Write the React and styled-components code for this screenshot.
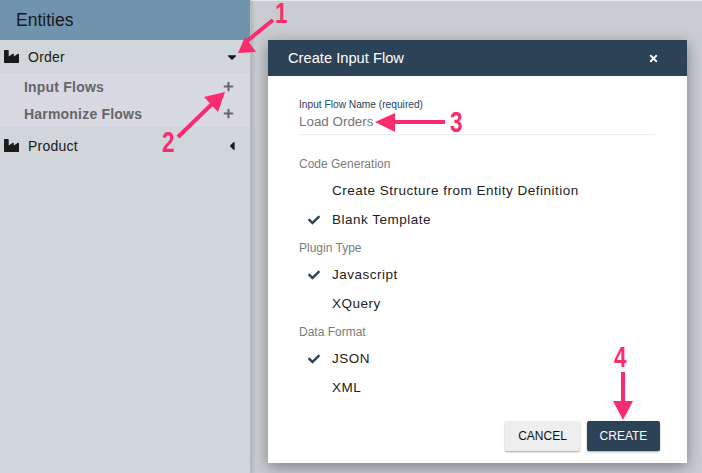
import styled, { createGlobalStyle } from "styled-components";
import { FaCaretDown, FaCaretLeft, FaCheck, FaIndustry, FaPlus, FaTimes } from "react-icons/fa";

const sections = [
  {
    title: "Code Generation",
    options: [
      { label: "Create Structure from Entity Definition" },
      { label: "Blank Template", checked: true },
    ],
  },
  {
    title: "Plugin Type",
    options: [{ label: "Javascript", checked: true }, { label: "XQuery" }],
  },
  {
    title: "Data Format",
    options: [{ label: "JSON", checked: true }, { label: "XML" }],
  },
];

const App = () => {
  return (
    <Page>
      <GlobalStyle />
      <Sidebar>
        <SidebarHeader>Entities</SidebarHeader>
        <EntityRow>
          <FaIndustry size={15} />
          <EntityName>Order</EntityName>
          <FaCaretDown size={14} />
        </EntityRow>
        <FlowList>
          <FlowRow>
            <FlowName>Input Flows</FlowName>
            <FaPlus size={10} />
          </FlowRow>
          <FlowRow>
            <FlowName>Harmonize Flows</FlowName>
            <FaPlus size={10} />
          </FlowRow>
        </FlowList>
        <EntityRow $tall>
          <FaIndustry size={15} />
          <EntityName>Product</EntityName>
          <FaCaretLeft size={14} />
        </EntityRow>
      </Sidebar>
      <Main />
      <Modal>
        <ModalHeader>
          <ModalTitle>Create Input Flow</ModalTitle>
          <FaTimes size={11} />
        </ModalHeader>
        <ModalBody>
          <NameLabel>Input Flow Name (required)</NameLabel>
          <NameValue>Load Orders</NameValue>
          {sections.map((section) => (
            <Section key={section.title}>
              <SectionTitle>{section.title}</SectionTitle>
              {section.options.map((option) => (
                <Option key={option.label}>
                  <CheckSlot>{option.checked && <FaCheck size={12} />}</CheckSlot>
                  {option.label}
                </Option>
              ))}
            </Section>
          ))}
          <Actions>
            <CancelButton>CANCEL</CancelButton>
            <CreateButton>CREATE</CreateButton>
          </Actions>
        </ModalBody>
      </Modal>
      <Arrows viewBox="0 0 702 473">
        <path d="M273 20 L247 41" />
        <path d="M238 53 L245 37 L256 52 Z" className="head" />
        <path d="M178 137 L212 104" />
        <path d="M225 92 L204 97 L218 112 Z" className="head" />
        <path d="M445 122 L390 122" />
        <path d="M375 122 L395 113 L395 132 Z" className="head" />
        <path d="M623 372 L623 405" />
        <path d="M623 420 L613 401 L633 401 Z" className="head" />
      </Arrows>
      <Badge $x={275} $y={2}>1</Badge>
      <Badge $x={162} $y={131}>2</Badge>
      <Badge $x={450} $y={111}>3</Badge>
      <Badge $x={614} $y={346}>4</Badge>
    </Page>
  );
};

export default App;

const GlobalStyle = createGlobalStyle`
  html, body {
    margin: 0;
    padding: 0;
  }
  body {
    font-family: "Liberation Sans", Arial, sans-serif;
    overflow: hidden;
  }
`;

const Page = styled.div`
  position: relative;
  display: flex;
  width: 702px;
  height: 473px;
  overflow: hidden;
  background: #c9cdd2;
`;

const Sidebar = styled.div`
  width: 250px;
  flex: none;
  background: #d0d6d9;
  border-right: 1px solid #b7bcc0;
  box-shadow: 2px 0 3px rgba(0, 0, 0, 0.12);
`;

const SidebarHeader = styled.div`
  height: 40px;
  padding-left: 16px;
  display: flex;
  align-items: center;
  background: #7093ae;
  color: #15191d;
  font-size: 17.5px;
`;

const EntityRow = styled.div`
  height: 33px;
  padding: ${(p) => (p.$tall ? "2px" : "0")} 11px 0 4px;
  display: flex;
  align-items: center;
  color: #1a1a1a;
`;

const EntityName = styled.span`
  flex: 1;
  margin-left: 9px;
  font-size: 14px;
  letter-spacing: 0.25px;
`;

const FlowList = styled.div`
  height: 54px;
  padding: 0 16px 0 24px;
  background: #d9d9e4;
  color: #666;
`;

const FlowRow = styled.div`
  height: 27px;
  display: flex;
  align-items: center;
  justify-content: space-between;
  svg {
    width: 11px;
    height: 11px;
  }
`;

const FlowName = styled.span`
  font-size: 14px;
  font-weight: 700;
  letter-spacing: 0.2px;
`;

const Main = styled.div`
  flex: 1;
  border-top: 1px solid #e4e7e9;
`;

const Modal = styled.div`
  position: absolute;
  left: 268px;
  top: 40px;
  width: 419px;
  height: 423px;
  background: #fff;
  box-shadow: 0 4px 14px rgba(0, 0, 0, 0.38);
`;

const ModalHeader = styled.div`
  height: 36px;
  padding: 0 28px 0 20px;
  display: flex;
  align-items: center;
  justify-content: space-between;
  background: #2c4257;
  color: #fff;
`;

const ModalTitle = styled.span`
  font-size: 14.7px;
`;

const ModalBody = styled.div`
  padding: 23px 32px 0 31px;
`;

const NameLabel = styled.div`
  font-size: 10.2px;
  line-height: 12px;
  color: #2c4257;
`;

const NameValue = styled.div`
  height: 23px;
  font-size: 13.4px;
  line-height: 22px;
  color: #757575;
  border-bottom: 1px solid #eeeeee;
  margin-bottom: 21px;
`;

const Section = styled.div`
  margin-bottom: 6px;
`;

const SectionTitle = styled.div`
  font-size: 12px;
  line-height: 16px;
  color: #7b7b7b;
  margin-bottom: 4px;
`;

const Option = styled.div`
  height: 29px;
  display: flex;
  align-items: center;
  font-size: 13.5px;
  letter-spacing: 0.5px;
  color: #222;
`;

const CheckSlot = styled.span`
  width: 33px;
  flex: none;
  padding-left: 9px;
  box-sizing: border-box;
  display: flex;
  color: #2c4257;
`;

const Actions = styled.div`
  position: absolute;
  right: 27px;
  bottom: 12px;
  display: flex;
  gap: 7px;
`;

const CancelButton = styled.div`
  width: 75px;
  height: 30px;
  display: flex;
  align-items: center;
  justify-content: center;
  background: #eeeeee;
  border-radius: 2px;
  box-shadow: 0 1px 2px rgba(0, 0, 0, 0.35);
  color: #111;
  font-size: 12px;
`;

const CreateButton = styled(CancelButton)`
  width: 73px;
  background: #2c4257;
  color: #fff;
`;

const Arrows = styled.svg`
  position: absolute;
  left: 0;
  top: 0;
  width: 702px;
  height: 473px;
  pointer-events: none;
  path {
    stroke: #fb2c6e;
    stroke-width: 4;
    fill: none;
  }
  path.head {
    fill: #fb2c6e;
    stroke: none;
  }
`;

const Badge = styled.span`
  position: absolute;
  left: ${(p) => p.$x}px;
  top: ${(p) => p.$y}px;
  color: #fb2c6e;
  font-size: 29px;
  line-height: 22px;
  font-weight: 700;
  transform: scaleX(0.78);
  transform-origin: left center;
`;
